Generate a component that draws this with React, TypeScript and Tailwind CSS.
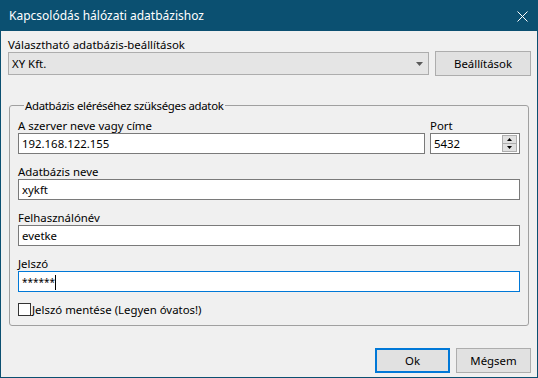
import React from 'react';

const font = { fontFamily: '"Noto Sans", "Segoe UI", sans-serif' };

function Field({ label, value, focused }: { label: string; value: React.ReactNode; focused?: boolean }) {
  return (
    <div className="mt-[10px]">
      <div className="h-[15px] leading-[15px]">{label}</div>
      <div
        className={
          'h-[21px] w-full bg-white pl-[3px] leading-[19px] border ' +
          (focused ? 'border-[#0078d7]' : 'border-[#7a7a7a]')
        }
      >
        {value}
      </div>
    </div>
  );
}

export default function App() {
  return (
    <div
      className="w-[538px] h-[378px] flex flex-col border border-[#0b5071] bg-[#f0f0f0] text-[11.4px] text-black"
      style={font}
    >
      {/* címsor */}
      <div className="h-[30px] shrink-0 flex items-center justify-between bg-[#0b5071] pl-[8px] pr-[9px] text-white text-[12px]">
        <span>Kapcsolódás hálózati adatbázishoz</span>
        <svg width="11" height="11" viewBox="0 0 11 11">
          <path d="M0.5 0.5 L10.5 10.5 M10.5 0.5 L0.5 10.5" stroke="white" strokeWidth="1" />
        </svg>
      </div>

      <div className="flex-1 pl-[7px] pr-[6px]">
        <div className="mt-[7px] leading-[14px] h-[13px]">Választható adatbázis-beállítások</div>
        <div className="flex items-center gap-[6px] h-[25px]">
          <div className="w-[421px] h-[23px] flex items-center justify-between border border-[#adadad] bg-[#e5e5e5] pl-[3px] pr-[5px]">
            <span>XY Kft.</span>
            <svg width="7" height="4" viewBox="0 0 7 4">
              <path d="M0 0 H7 L3.5 4 Z" fill="#5a5a5a" />
            </svg>
          </div>
          <button className="w-[96px] h-[25px] border border-[#adadad] bg-[#e1e1e1]">Beállítások</button>
        </div>

        {/* csoport */}
        <fieldset className="mt-[22px] ml-[1px] w-[520px] border border-[#a0a0a0] rounded-[3px] pl-[8px] pr-[8px] pb-[9px]">
          <legend className="ml-[6px] px-[1px] leading-[15px] tracking-[-0.3px]">Adatbázis eléréséhez szükséges adatok</legend>
          <div className="flex gap-[5px] -mt-[5px]">
            <div className="w-[407px]">
              <Field label="A szerver neve vagy címe" value="192.168.122.155" />
            </div>
            <div className="w-[90px] mt-[10px]">
              <div className="h-[15px] leading-[15px]">Port</div>
              <div className="h-[21px] flex items-center justify-between bg-white border border-[#7a7a7a] pl-[3px] pr-[2px]">
                <span>5432</span>
                <div className="flex flex-col w-[15px] h-[17px]">
                  <div className="flex-1 flex items-center justify-center bg-[#e1e1e1] border border-[#adadad]">
                    <svg width="5" height="3" viewBox="0 0 5 3">
                      <path d="M0 3 H5 L2.5 0 Z" fill="#000" />
                    </svg>
                  </div>
                  <div className="flex-1 flex items-center justify-center bg-[#e1e1e1] border border-t-0 border-[#adadad]">
                    <svg width="5" height="3" viewBox="0 0 5 3">
                      <path d="M0 0 H5 L2.5 3 Z" fill="#000" />
                    </svg>
                  </div>
                </div>
              </div>
            </div>
          </div>
          <Field label="Adatbázis neve" value="xykft" />
          <Field label="Felhasználónév" value="evetke" />
          <Field
            label="Jelszó"
            focused
            value={
              <span className="inline-flex items-center">
                <span className="text-[10px]">******</span>
                <span className="inline-block w-[1px] h-[15px] bg-black" />
              </span>
            }
          />
          <div className="mt-[11px] flex items-center h-[13px] gap-[1px]">
            <div className="w-[13px] h-[13px] border border-[#333] bg-white" />
            <span className="leading-[13px]">Jelszó mentése (Legyen óvatos!)</span>
          </div>
        </fieldset>

        <div className="mt-[22px] flex justify-end gap-[6px]">
          <button className="w-[75px] h-[25px] border-2 border-[#0078d7] bg-[#e1e1e1]">Ok</button>
          <button className="w-[75px] h-[25px] border border-[#adadad] bg-[#e1e1e1]">Mégsem</button>
        </div>
      </div>
    </div>
  );
}
